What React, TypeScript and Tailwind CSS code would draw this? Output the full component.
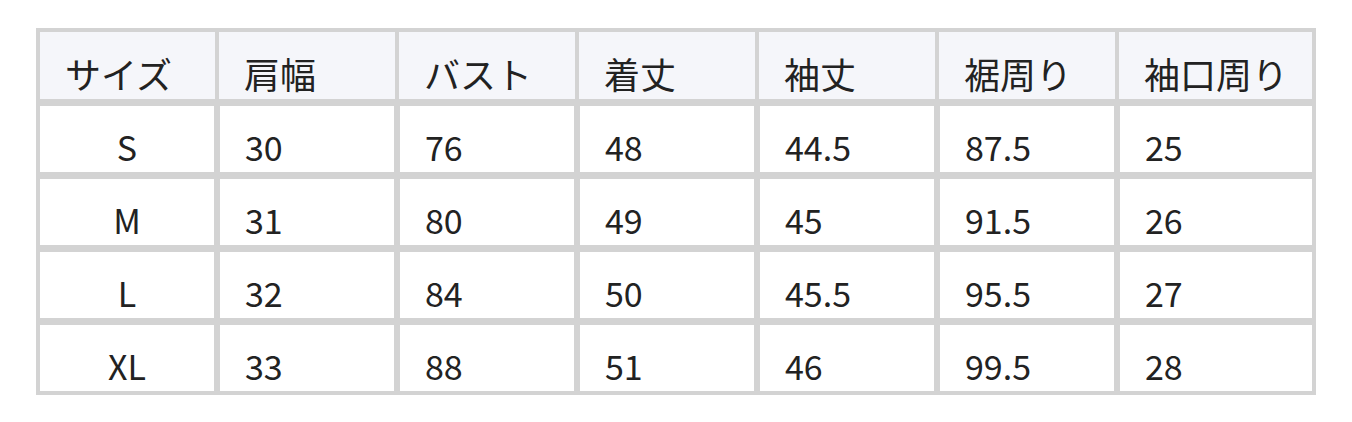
const headers = ["サイズ", "肩幅", "バスト", "着丈", "袖丈", "裾周り", "袖口周り"];

const rows = [
  ["S", "30", "76", "48", "44.5", "87.5", "25"],
  ["M", "31", "80", "49", "45", "91.5", "26"],
  ["L", "32", "84", "50", "45.5", "95.5", "27"],
  ["XL", "33", "88", "51", "46", "99.5", "28"],
];

const cols = "grid grid-cols-[175px_176px_176px_176px_176px_176px_193px] gap-[4px]";

export default function App() {
  return (
    <div className="w-[1352px] h-[422px] bg-white pt-[28px] pl-[36px] text-[#222] font-['Noto_Sans_CJK_JP',sans-serif]">
      <div className="w-[1280px] bg-[#d3d3d3] p-[4px] flex flex-col gap-[7px]">
        <div className={`${cols} h-[67px]`}>
          {headers.map((h) => (
            <div key={h} className="bg-[#f5f6fa] pl-[25px] pt-[23px] text-[36px] leading-none whitespace-nowrap">
              {h}
            </div>
          ))}
        </div>
        {rows.map((row) => (
          <div key={row[0]} className={`${cols} h-[66px]`}>
            {row.map((v, i) => (
              <div
                key={i}
                className={
                  i === 0
                    ? "bg-white border-r border-[#d3d3d3] text-center pt-[24px] text-[34px] leading-none"
                    : i === row.length - 1
                      ? "bg-white border-l border-[#d3d3d3] pl-[25px] pt-[24px] text-[34px] leading-none"
                      : "bg-white border-x border-[#d3d3d3] pl-[25px] pt-[24px] text-[34px] leading-none"
                }
              >
                {v}
              </div>
            ))}
          </div>
        ))}
      </div>
    </div>
  );
}
